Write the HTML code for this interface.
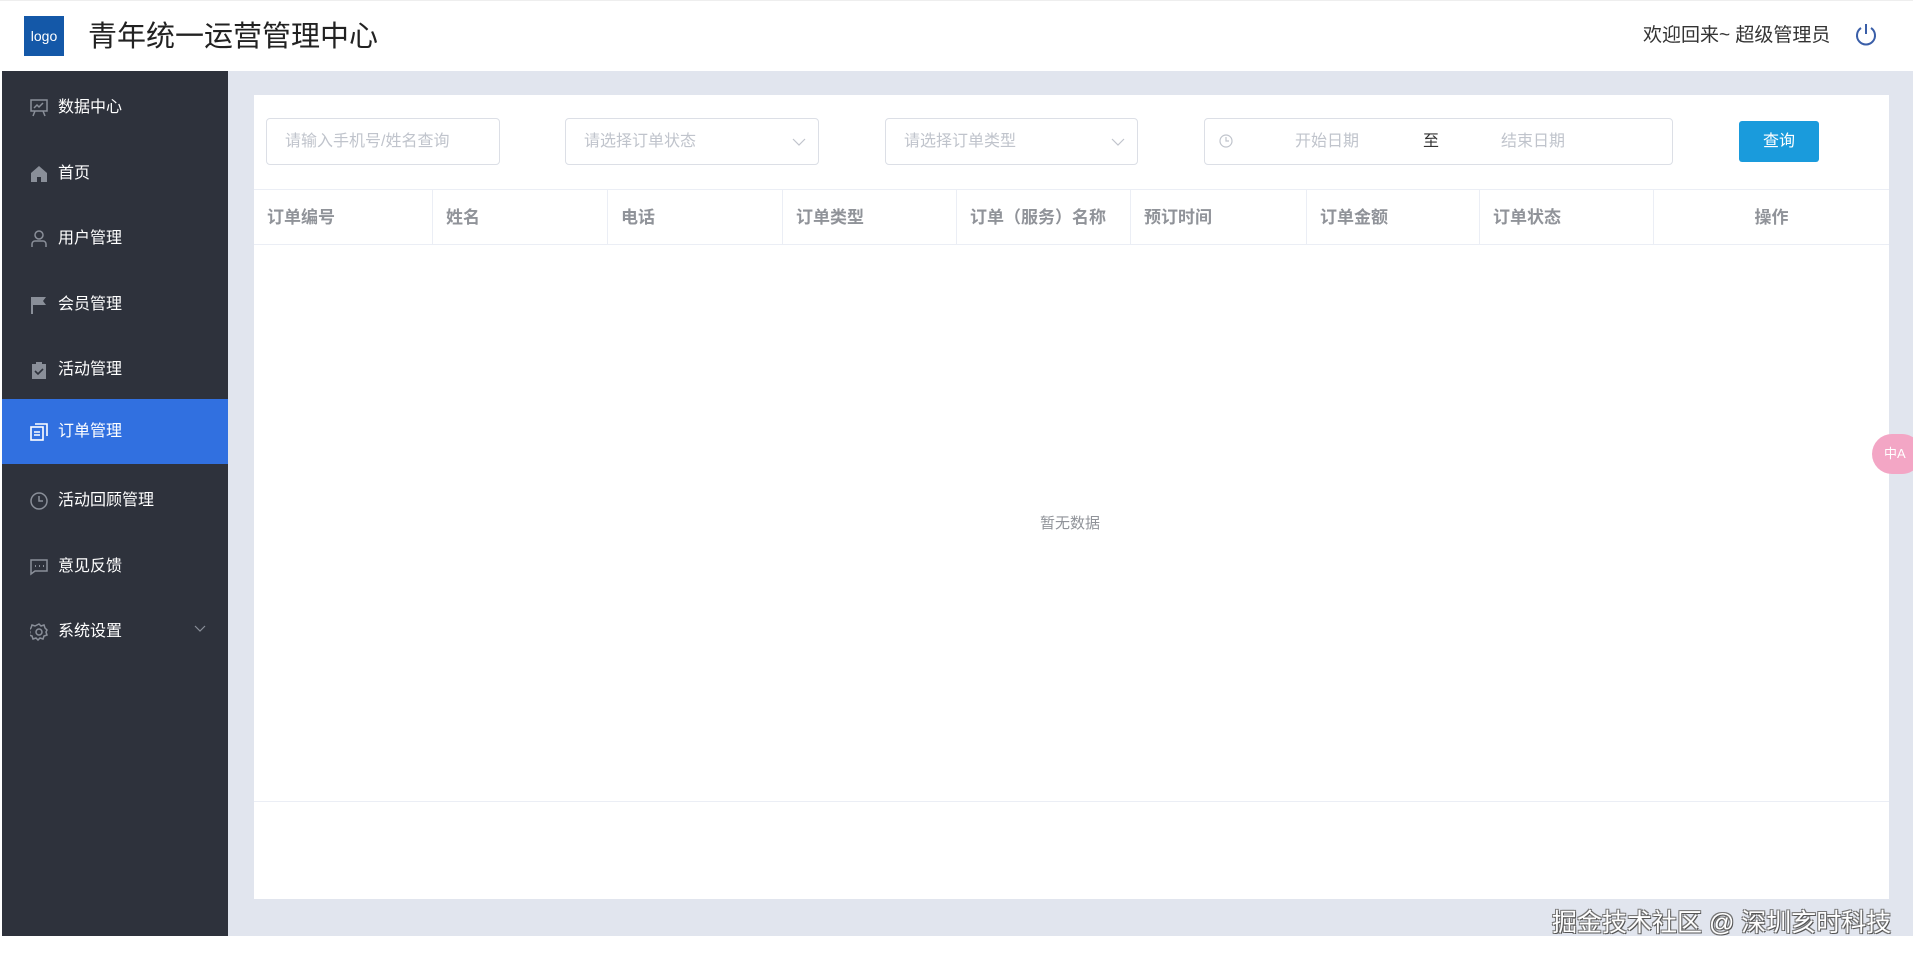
<!DOCTYPE html>
<html><head><meta charset="utf-8">
<style>
*{margin:0;padding:0;box-sizing:border-box}
body{width:1913px;height:960px;background:#fff;font-family:"Liberation Sans","Noto Sans CJK SC",sans-serif;position:relative;overflow:hidden}
.abs{position:absolute}
#hdr{left:0;top:0;width:1913px;height:71px;background:#fff;border-top:1px solid #eee}
#logo{left:24px;top:16px;width:40px;height:40px;background:#1458a8;color:#fff;font-size:14px;line-height:40px;text-align:center}
#title{left:88px;top:18px;font-size:29px;color:#222;line-height:38px}
#welcome{left:1643px;top:24px;font-size:19px;color:#333;line-height:24px}
#side{left:2px;top:71px;width:226px;height:865px;background:#2e323c}
.mi{position:absolute;left:0;width:226px;height:65px;color:#fff;font-size:16px;line-height:65px;padding-left:56px}
.mi svg{position:absolute;left:28px;top:24px}
.mi.act{background:#3170e0}
#main{left:228px;top:71px;width:1685px;height:865px;background:#e1e5ee}
#card{left:254px;top:95px;width:1635px;height:804px;background:#fff}
.inp{position:absolute;top:118px;height:47px;border:1px solid #dcdfe6;border-radius:4px;font-size:16px;color:#c0c4cc;line-height:45px;padding-left:18px}
.arr{position:absolute;right:12px;top:13px}
#btn{left:1739px;top:121px;width:80px;height:41px;background:#1a9bdc;color:#fff;border-radius:3px;font-size:16px;text-align:center;line-height:41px}
#thead{left:254px;top:189px;width:1635px;height:56px;border-top:1px solid #ebeef5;border-bottom:1px solid #ebeef5}
.th{position:absolute;top:0;height:55px;line-height:55px;font-size:17px;font-weight:bold;color:#909399;padding-left:13px;border-right:1px solid #ebeef5}
#empty{left:1040px;top:512px;font-size:15px;color:#909399}
#line{left:254px;top:801px;width:1635px;height:1px;background:#ebeef5}
#wm{left:1552px;top:903px;font-size:25px;color:#fff;text-shadow:1px 1px 0 #555,-1px -1px 0 #777,1px -1px 0 #777,-1px 1px 0 #777}
#tr{left:1872px;top:434px;width:50px;height:40px;border-radius:20px;background:#f3a6c5;color:#fff;font-size:13px;line-height:40px;padding-left:12px}
</style></head><body>
<div id="hdr" class="abs"></div>
<div id="logo" class="abs">logo</div>
<div id="title" class="abs">青年统一运营管理中心</div>
<div id="welcome" class="abs">欢迎回来~ 超级管理员</div>
<svg class="abs" style="left:1854px;top:22px" width="24" height="26" viewBox="0 0 24 26"><path d="M7 6A9 9 0 1 0 17 6" fill="none" stroke="#3a5ea8" stroke-width="2"/><path d="M12 2V12" stroke="#3a5ea8" stroke-width="2"/></svg>

<div id="side" class="abs">
<div class="mi" style="top:4px"><svg width="18" height="18" viewBox="0 0 18 18" fill="none" stroke="#8a8f99" stroke-width="1.5"><rect x="1" y="1" width="16" height="11"/><path d="M4 9l3-3 2 2 4-4M5 12l-2 5M13 12l2 5"/></svg>数据中心</div>
<div class="mi" style="top:70px"><svg width="18" height="18" viewBox="0 0 18 18"><path d="M9 1L1 8V17H7V12H11V17H17V8Z" fill="#8a8f99"/></svg>首页</div>
<div class="mi" style="top:135px"><svg width="18" height="18" viewBox="0 0 18 18" fill="none" stroke="#8a8f99" stroke-width="1.5"><circle cx="9" cy="5" r="4"/><path d="M2 17v-3a3 3 0 0 1 3-3h8a3 3 0 0 1 3 3v3"/></svg>用户管理</div>
<div class="mi" style="top:201px"><svg width="18" height="18" viewBox="0 0 18 18"><path d="M2 1V18" stroke="#8a8f99" stroke-width="2"/><path d="M3 1H16L13 5L16 9H3Z" fill="#8a8f99"/></svg>会员管理</div>
<div class="mi" style="top:266px"><svg width="18" height="18" viewBox="0 0 18 18"><rect x="2" y="3" width="14" height="15" fill="#8a8f99"/><rect x="6" y="1" width="6" height="3" fill="#8a8f99"/><path d="M5 10l3 3 5-5" stroke="#2e323c" stroke-width="1.6" fill="none"/></svg>活动管理</div>
<div class="mi act" style="top:328px"><svg width="18" height="18" viewBox="0 0 18 18" fill="none" stroke="#fff" stroke-width="1.6"><rect x="1" y="4" width="12" height="13"/><path d="M5 1H17V13M4 9H10M4 12H10"/></svg>订单管理</div>
<div class="mi" style="top:397px"><svg width="18" height="18" viewBox="0 0 18 18" fill="none" stroke="#8a8f99" stroke-width="1.5"><circle cx="9" cy="9" r="8"/><path d="M9 4V9H13"/></svg>活动回顾管理</div>
<div class="mi" style="top:463px"><svg width="18" height="18" viewBox="0 0 18 18" fill="none" stroke="#8a8f99" stroke-width="1.5"><path d="M1 2H17V13H5L1 16Z"/><path d="M5 8h1M9 8h1M13 8h1" stroke-width="2"/></svg>意见反馈</div>
<div class="mi" style="top:528px"><svg width="18" height="18" viewBox="0 0 18 18" fill="none" stroke="#8a8f99" stroke-width="1.5"><circle cx="9" cy="9" r="3"/><path d="M9 1l2 2 3-1 1 3 2 2-1 2 1 3-3 1-1 3-3-1-2 2-2-2-3 1-1-3-3-1 1-3-1-2 2-2 1-3 3 1z"/></svg>系统设置<svg style="left:192px;top:26px" width="12" height="8" viewBox="0 0 12 8"><path d="M1 1l5 5 5-5" fill="none" stroke="#8a8f99" stroke-width="1.2"/></svg></div>
</div>

<div id="main" class="abs"></div>
<div id="card" class="abs"></div>
<div class="inp" style="left:266px;width:234px">请输入手机号/姓名查询</div>
<div class="inp" style="left:565px;width:254px">请选择订单状态<svg class="arr" width="14" height="20" viewBox="0 0 14 20"><path d="M1 7l6 6 6-6" fill="none" stroke="#c0c4cc" stroke-width="1.2"/></svg></div>
<div class="inp" style="left:885px;width:253px">请选择订单类型<svg class="arr" width="14" height="20" viewBox="0 0 14 20"><path d="M1 7l6 6 6-6" fill="none" stroke="#c0c4cc" stroke-width="1.2"/></svg></div>
<div class="inp" style="left:1204px;width:469px;padding-left:0">
<svg style="position:absolute;left:14px;top:15px" width="14" height="14" viewBox="0 0 14 14" fill="none" stroke="#c0c4cc" stroke-width="1.2"><circle cx="7" cy="7" r="6"/><path d="M7 3V7H10"/></svg>
<span style="position:absolute;left:90px">开始日期</span><span style="position:absolute;left:218px;color:#333">至</span><span style="position:absolute;left:296px">结束日期</span></div>
<div id="btn" class="abs">查询</div>

<div id="thead" class="abs">
<div class="th" style="left:0;width:179px">订单编号</div>
<div class="th" style="left:179px;width:175px">姓名</div>
<div class="th" style="left:354px;width:175px">电话</div>
<div class="th" style="left:529px;width:174px">订单类型</div>
<div class="th" style="left:703px;width:174px">订单（服务）名称</div>
<div class="th" style="left:877px;width:176px">预订时间</div>
<div class="th" style="left:1053px;width:173px">订单金额</div>
<div class="th" style="left:1226px;width:174px">订单状态</div>
<div class="th" style="left:1400px;width:235px;text-align:center;padding-left:0;border-right:none">操作</div>
</div>
<div id="empty" class="abs">暂无数据</div>
<div id="line" class="abs"></div>
<div id="wm" class="abs">掘金技术社区 @ 深圳亥时科技</div>
<div id="tr" class="abs">中A</div>
</body></html>
